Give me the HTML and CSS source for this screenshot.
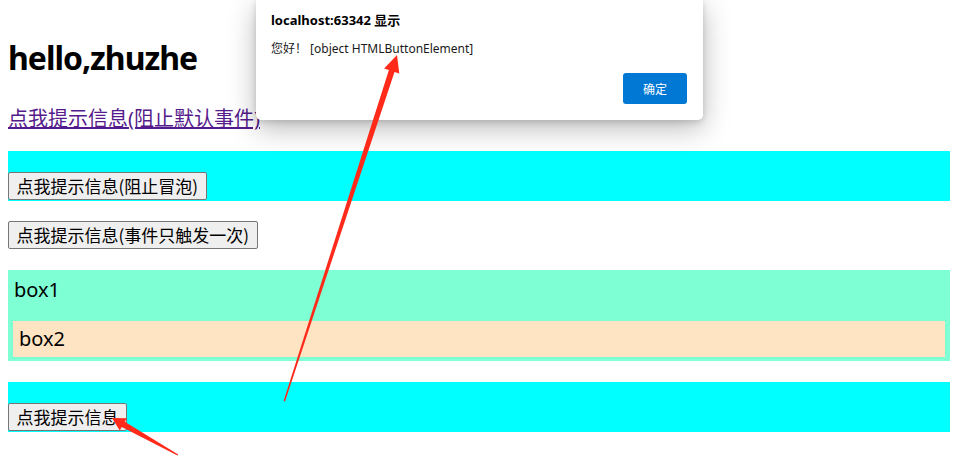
FILE: index.html
```html
<!DOCTYPE html>
<html lang="zh-CN">
<head>
<meta charset="utf-8">
<title>事件</title>
<link rel="stylesheet" href="styles.css">
</head>
<body>
<div class="page">
  <h1 class="title">hello,zhuzhe</h1>
  <p class="link-row"><a href="#" class="link">点我提示信息(阻止默认事件)</a></p>
  <div class="bar"><button class="btn">点我提示信息(阻止冒泡)</button></div>
  <div class="once"><button class="btn">点我提示信息(事件只触发一次)</button></div>
  <div class="box1">
    <div class="box1-label">box1</div>
    <div class="box2">box2</div>
  </div>
  <div class="bar bar-last"><button class="btn">点我提示信息</button></div>
</div>

<div class="dialog">
  <div class="dialog-title">localhost:63342 显示</div>
  <div class="dialog-msg">您好！ [object HTMLButtonElement]</div>
  <div class="dialog-actions"><button class="dialog-ok">确定</button></div>
</div>

<svg class="arrows" width="958" height="472" viewBox="0 0 958 472">
  <polygon fill="#ff2a1a" points="283.6,401 388.9,70.1 384.1,68.5 397,55 399.3,73.5 394.5,71.9 285,401.4"/>
  <polygon fill="#ff2a1a" points="177.5,455.5 121.8,427 119.8,430.5 112,418 126.8,418.3 124.8,421.8 178.2,454.6"/>
</svg>
</body>
</html>
```

FILE: styles.css
```css
html, body {
  margin: 0;
  padding: 0;
  background: #ffffff;
}

body {
  font-family: "Noto Sans", "Noto Sans CJK SC", sans-serif;
  color: #000000;
  width: 958px;
  height: 472px;
  overflow: hidden;
  position: relative;
}

.page {
  padding: 0 8px;
  display: flow-root;
}

.title {
  margin: 38px 0 0;
  font-size: 32px;
  line-height: 40px;
  font-weight: 700;
  letter-spacing: -1px;
}

.link-row {
  margin: 29px 0 0;
  font-size: 20px;
  line-height: 24px;
}

.link {
  color: #551a8b;
  text-decoration: underline;
}

.bar {
  margin-top: 20px;
  height: 50px;
  background: #00ffff;
  display: flex;
  align-items: flex-end;
  padding-bottom: 1px;
  box-sizing: border-box;
}

.bar-last {
  margin-top: 21px;
}

.once {
  margin-top: 20px;
  display: flex;
}

.btn {
  font-family: "Noto Sans CJK SC", sans-serif;
  font-size: 17px;
  line-height: 24px;
  height: 28px;
  padding: 0 7.5px;
  margin: 0;
  color: #000000;
  background: #efefef;
  border: 1px solid #767676;
  border-radius: 2px;
}

.box1 {
  margin-top: 21px;
  background: #7fffd4;
  padding: 5px 5px 4px;
}

.box1-label {
  font-size: 20px;
  line-height: 30px;
  padding-left: 1px;
}

.box2 {
  margin-top: 16px;
  background: #ffe4c4;
  height: 36px;
  line-height: 36px;
  font-size: 20px;
  padding-left: 6px;
}

.dialog {
  position: absolute;
  top: 0;
  left: 256px;
  width: 447px;
  height: 120px;
  background: #ffffff;
  border-radius: 0 0 5px 5px;
  box-shadow: 0 8px 28px rgba(0, 0, 0, 0.28), 0 2px 6px rgba(0, 0, 0, 0.15);
  box-sizing: border-box;
  padding: 12px 16px 0 15px;
  display: flex;
  flex-direction: column;
  font-family: "Noto Sans", "Noto Sans CJK SC", sans-serif;
  color: #1a1a1a;
}

.dialog-title {
  font-size: 13px;
  font-weight: 700;
  line-height: 16px;
  color: #000000;
}

.dialog-msg {
  margin-top: 13px;
  font-size: 12px;
  line-height: 16px;
}

.dialog-actions {
  margin-top: 16px;
  display: flex;
  justify-content: flex-end;
}

.dialog-ok {
  width: 64px;
  height: 31px;
  border: none;
  border-radius: 3px;
  background: #0078d4;
  color: #ffffff;
  font-family: "Noto Sans CJK SC", sans-serif;
  font-size: 12px;
  padding: 0;
}

.arrows {
  position: absolute;
  top: 0;
  left: 0;
  pointer-events: none;
}
```
